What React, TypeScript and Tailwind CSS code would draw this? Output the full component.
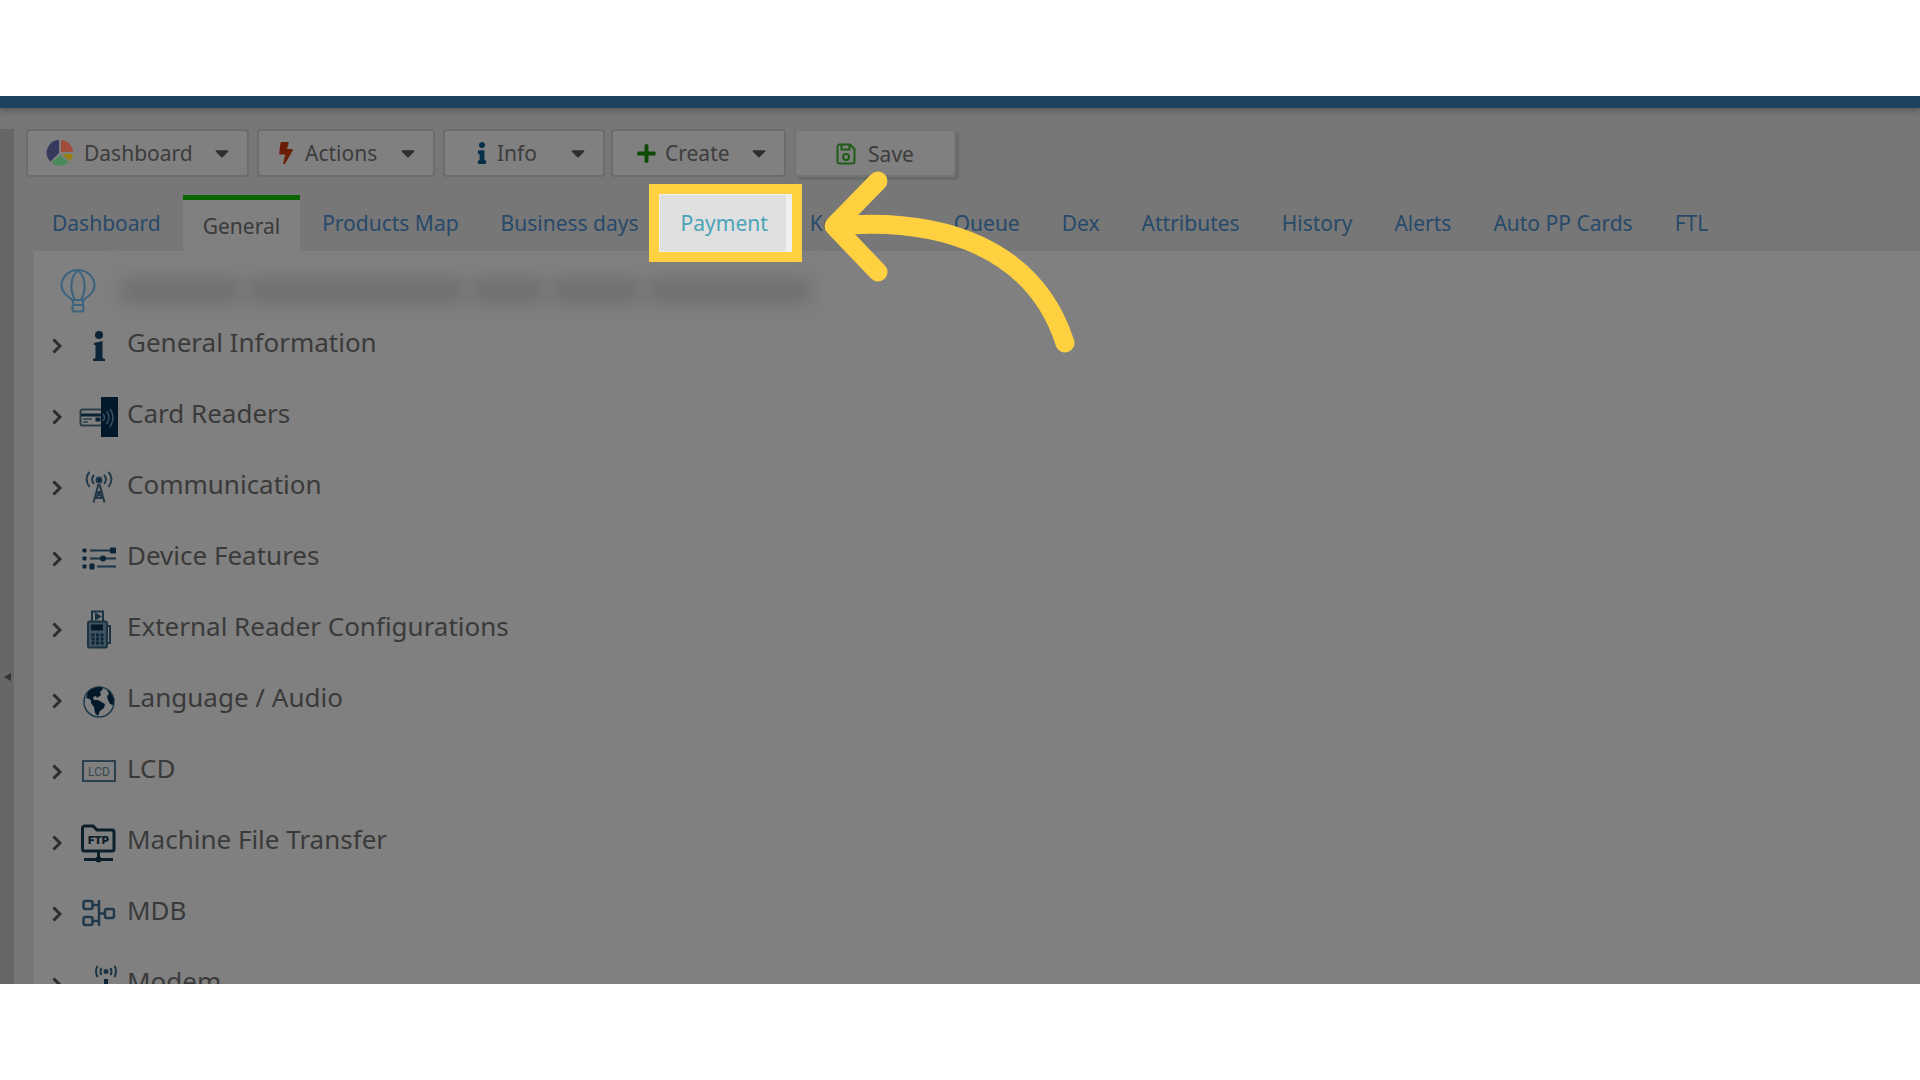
import type { ReactNode } from "react";
import { FaInfo, FaPlus, FaBolt, FaCaretDown } from "react-icons/fa";

const INK = "#0b2438";

function PieIcon() {
  return (
    <svg width="28" height="28" viewBox="0 0 28 28">
      <path d="M13 1v13l-8.500 8.500A12.500 12.500 0 0 1 13 1z" fill="#353a5c" />
      <path d="M15 1a12.500 12.500 0 0 1 12 12H15z" fill="#a04f3c" />
      <path d="M16 15h11a12 12 0 0 1-3.200 7z" fill="#97800f" />
      <path d="M14 16l8.500 7.500a13 13 0 0 1-17 0z" fill="#4c8a5c" />
    </svg>
  );
}

function SaveIcon() {
  return (
    <svg width="20" height="22" viewBox="0 0 20 22" fill="none" stroke="#1f5c17" strokeWidth="2">
      <path d="M3.500 1.500H14l4.500 4.500v12.500a2 2 0 0 1-2 2h-13a2 2 0 0 1-2-2v-15a2 2 0 0 1 2-2z" />
      <path d="M5.500 2v4.500h8V2" />
      <circle cx="10" cy="14" r="3" />
    </svg>
  );
}

function BalloonIcon() {
  return (
    <svg width="36" height="44" viewBox="0 0 36 44" fill="none" stroke="#3b627e" strokeWidth="2">
      <path d="M12.500 31C7 27 1.500 23 1.500 16.500a16.500 15.500 0 0 1 33 0C34.500 23 29 27 23.500 31z" />
      <path d="M15 31C10 22 9.500 8 18 1.500C26.500 8 26 22 21 31" />
      <path d="M12.500 31l1 5M23.500 31l-1 5" />
      <rect x="12.500" y="36" width="11" height="6.500" rx="2" />
    </svg>
  );
}

function InfoIcon() {
  return (
    <svg width="40" height="40" viewBox="0 0 40 40" fill={INK}>
      <circle cx="20" cy="9" r="4" />
      <path d="M15 17l8.500-2v17l2.500 1v2H14v-2l2.500-1V19H15z" />
    </svg>
  );
}

function CardIcon() {
  return (
    <svg width="40" height="40" viewBox="0 0 40 40" fill="none" stroke="#2b3e4c">
      <rect x="1.500" y="12.500" width="28" height="16" rx="2" strokeWidth="2" />
      <path d="M2 18h21" stroke={INK} strokeWidth="3" />
      <path d="M4 22h9M4 25h5" strokeWidth="1.500" />
      <rect x="17" y="21" width="4" height="3" fill={INK} stroke={INK} />
      <rect x="22" y="0" width="17" height="40" fill="#03192a" stroke="none" />
      <path d="M24 17q3 3.500 0 7M27.500 14q5 6.500 0 13M31 12q6 8.500 0 18" stroke="#3d5260" strokeWidth="1.500" />
    </svg>
  );
}

function AntennaIcon() {
  return (
    <svg width="40" height="40" viewBox="0 0 40 40" fill="none" stroke="#22394a" strokeWidth="2">
      <path d="M10.500 4q-6 7 0 15M15 7q-4 4.500 0 9M29.500 4q6 7 0 15M25 7q4 4.500 0 9" />
      <circle cx="20" cy="12" r="2.500" fill={INK} />
      <path d="M19.500 16l-5 18.500M20.500 16l5 18.500M17.500 24h5M16 30h8M17.500 24l6.500 6M22.500 24L16 30" />
    </svg>
  );
}

function SlidersIcon() {
  return (
    <svg width="40" height="40" viewBox="0 0 40 40" fill={INK} stroke="#1b3548" strokeWidth="2">
      <path d="M11 11.500h20M11 19.500h26M18 27.500h19" />
      <g stroke="none">
        <rect x="3.500" y="9.500" width="4" height="4" rx="1" />
        <rect x="3.500" y="17.500" width="4" height="4" rx="1" />
        <rect x="3.500" y="25.500" width="4" height="4" rx="1" />
        <rect x="31" y="8.500" width="6" height="6" rx="1" />
        <circle cx="24" cy="19.500" r="3" />
        <rect x="10.500" y="24.500" width="5" height="6" rx="1" />
      </g>
    </svg>
  );
}

function TerminalIcon() {
  return (
    <svg width="40" height="40" viewBox="0 0 40 40" fill="none" stroke="#1b3343" strokeWidth="2">
      <path d="M13 11V1.500h11V11" />
      <path d="M17 4v5l4-2.500z" fill={INK} />
      <rect x="9" y="11.500" width="19" height="26" rx="1.500" fill="#40535f" />
      <path d="M28 16h3v17h-3" />
      <rect x="12" y="14.500" width="12" height="6" fill="#03192a" stroke="none" />
      <path d="M14 23.500v11M18.500 23.500v11M23 23.500v11" strokeDasharray="3 1" stroke={INK} strokeWidth="3" />
    </svg>
  );
}

function GlobeIcon() {
  return (
    <svg width="40" height="40" viewBox="0 0 40 40">
      <circle cx="20" cy="21" r="15" fill="none" stroke="#1f3a4c" strokeWidth="1.500" />
      <path d="M9 11q5-5 13-5l2 2-3 3 1 3-4 3-1-2-3 1 1 3 4 0 7 4-1 4-4 3-2 5-3-3-1-6-3-4 0-3-4-2-1 1z" fill="#03192a" />
      <path d="M28 9l3 2 4 7-1 6-3-1-2-4-1-4 2-2z" fill="#03192a" />
    </svg>
  );
}

function LcdIcon() {
  return (
    <svg width="40" height="40" viewBox="0 0 40 40">
      <rect x="4" y="9" width="32" height="20" fill="none" stroke="#2c414f" strokeWidth="2" />
      <text x="20" y="24" textAnchor="middle" fontSize="12" fontFamily="Roboto, sans-serif" fill="#34464f">
        LCD
      </text>
    </svg>
  );
}

function FtpIcon() {
  return (
    <svg width="40" height="40" viewBox="0 0 40 40" fill="none" stroke="#0d1f2a" strokeWidth="3">
      <path d="M3.500 5a2 2 0 0 1 2-2H14l4 4h15a2 2 0 0 1 2 2v17a2 2 0 0 1-2 2H5.500a2 2 0 0 1-2-2z" />
      <path d="M19.500 28v9M5 36.500h29" />
      <circle cx="19.500" cy="36.500" r="1.500" />
      <text x="19.500" y="21" textAnchor="middle" fontSize="11" fontWeight="900" fontFamily="Inter, sans-serif" fill="#0d1f2a" stroke="none">
        FTP
      </text>
    </svg>
  );
}

function MdbIcon() {
  return (
    <svg width="40" height="40" viewBox="0 0 40 40" fill="none" stroke="#20384a" strokeWidth="2.500">
      <rect x="4.500" y="7" width="9" height="8" rx="2" />
      <rect x="4.500" y="23" width="9" height="8" rx="2" />
      <rect x="26" y="15" width="9" height="9" rx="2" />
      <path d="M13.500 11H20M13.500 27H20M20 6v26M20 19.500h6" />
    </svg>
  );
}

function ModemIcon() {
  return (
    <svg width="40" height="40" viewBox="0 0 40 40" fill="none" stroke="#1b3343" strokeWidth="2">
      <path d="M18.500 1q-3 5 0 11M22.500 3q-2 3.500 0 7M35.500 1q3 5 0 11M31.500 3q2 3.500 0 7" />
      <circle cx="27" cy="6.500" r="1.500" fill={INK} />
      <path d="M27 14v14" stroke={INK} strokeWidth="4" />
    </svg>
  );
}

const MENUS: { label: string; icon: ReactNode; box: string; iconBox: string }[] = [
  { label: "Dashboard", icon: <PieIcon />, box: "w-[223px] mr-2 pl-4.5", iconBox: "w-7" },
  { label: "Actions", icon: <FaBolt size={22} color="#6b1e06" />, box: "w-[178px] mr-2 pl-4.5", iconBox: "w-4.5" },
  { label: "Info", icon: <FaInfo size={22} color="#06304a" />, box: "w-[162px] mr-1.5 pl-8", iconBox: "w-2.5" },
  { label: "Create", icon: <FaPlus size={21} color="#0f4a06" />, box: "w-[175px] mr-2 pl-6", iconBox: "w-4.5" },
];

const TABS = [
  "Dashboard",
  "General",
  "Products Map",
  "Business days",
  "Payment",
  "Keep Alive",
  "Queue",
  "Dex",
  "Attributes",
  "History",
  "Alerts",
  "Auto PP Cards",
  "FTL",
];

const SECTIONS: { label: string; icon: ReactNode }[] = [
  { label: "General Information", icon: <InfoIcon /> },
  { label: "Card Readers", icon: <CardIcon /> },
  { label: "Communication", icon: <AntennaIcon /> },
  { label: "Device Features", icon: <SlidersIcon /> },
  { label: "External Reader Configurations", icon: <TerminalIcon /> },
  { label: "Language / Audio", icon: <GlobeIcon /> },
  { label: "LCD", icon: <LcdIcon /> },
  { label: "Machine File Transfer", icon: <FtpIcon /> },
  { label: "MDB", icon: <MdbIcon /> },
  { label: "Modem", icon: <ModemIcon /> },
];

function Toolbar() {
  return (
    <div className="flex">
      {MENUS.map((menu) => (
        <button
          key={menu.label}
          type="button"
          className={`flex h-12 shrink-0 items-center rounded-sm border-2 border-[#6c6c6c] bg-[#808080] pr-3.5 text-[#3c3c3c] ${menu.box}`}
        >
          <span className={`flex shrink-0 justify-center ${menu.iconBox}`}>
            <span className="shrink-0">{menu.icon}</span>
          </span>
          <span className="ml-2.5 flex-1 text-left">{menu.label}</span>
          <FaCaretDown size={22} color="#2e2e2e" />
        </button>
      ))}
      <button
        type="button"
        className="flex h-12 w-[162px] shrink-0 items-center justify-center gap-3 rounded-sm border-2 border-[#747474] bg-[#808080] pt-0.5 text-[#3c3c3c] shadow-[3px_3px_1px_#676c66]"
      >
        <SaveIcon />
        Save
      </button>
    </div>
  );
}

function Tab({ label }: { label: string }) {
  if (label === "General") {
    return (
      <button type="button" role="tab" aria-selected="true" className="h-14 shrink-0 border-t-5 border-[#0a6400] bg-[#808080] px-5 text-[#3a3a3a]">
        {label}
      </button>
    );
  }
  if (label === "Payment") {
    return (
      <div className="relative h-14 shrink-0">
        <button type="button" role="tab" className="h-full px-5 text-[#4ba3b8]">
          <span className="relative z-20">{label}</span>
        </button>
        <div className="absolute -top-[11px] -right-3.5 -bottom-[11px] -left-3 z-10 border-10 border-[#ffd141] bg-[#efefef] py-px pr-1.5 pl-px">
          <div className="h-full bg-[#e0e0e0]" />
        </div>
        <svg className="absolute -top-10 left-32.5 z-20" width="290" height="210" viewBox="0 0 290 210" fill="none" stroke="#ffd141" strokeWidth="19" strokeLinecap="round" strokeLinejoin="round">
          <path d="M87 26L43 71l44 46M43 71C154 61 244 95 274 188" />
        </svg>
      </div>
    );
  }
  return (
    <button type="button" role="tab" className="h-14 shrink-0 px-5 text-[#27496a]">
      {label}
    </button>
  );
}

export default function App() {
  return (
    <div className="h-screen overflow-hidden bg-white pt-24 pb-24 font-['Noto_Sans',sans-serif]">
      <div className="flex h-full flex-col overflow-hidden bg-[#777777] text-[21px] leading-7">
        <header className="h-3 shrink-0 bg-[#1b4360] shadow-[0_2px_6px_#555555]" />
        <div className="flex min-h-0 flex-1 pt-[21px]">
          <aside className="flex w-3.5 shrink-0 items-center justify-center bg-[#676767] pt-60">
            <svg width="8" height="8" viewBox="0 0 8 8">
              <path d="M8 0v8L1 4z" fill="#333333" />
            </svg>
          </aside>
          <main className="flex min-w-0 flex-1 flex-col pl-3">
            <Toolbar />
            <nav role="tablist" className="mt-4.5 ml-1.5 flex gap-0.5">
              {TABS.map((label) => (
                <Tab key={label} label={label} />
              ))}
            </nav>
            <section className="ml-2 min-h-0 flex-1 overflow-hidden bg-[#808080]">
              <div className="flex h-[73px] items-center gap-5 pt-1.5 pl-6.5">
                <BalloonIcon />
                <div className="flex h-8 w-[700px] items-center gap-4 bg-[#7a7a7a] px-2 blur-[9px]">
                  <div className="h-5 w-28 bg-[#6d6d6d]" />
                  <div className="h-5 w-52 bg-[#6d6d6d]" />
                  <div className="h-5 w-16 bg-[#6d6d6d]" />
                  <div className="h-5 w-20 bg-[#6d6d6d]" />
                  <div className="h-5 flex-1 bg-[#6d6d6d]" />
                </div>
              </div>
              <ul>
                {SECTIONS.map((section) => (
                  <li key={section.label} className="h-[71px]">
                    <button type="button" className="flex items-start text-left text-[26px] text-[#3a3a3a]">
                      <svg className="mt-3.5 ml-4.5" width="10" height="16" viewBox="0 0 10 16" fill="none" stroke="#2c2c2c" strokeWidth="3">
                        <path d="M1.500 1.500L8 8l-6.500 6.500" />
                      </svg>
                      <span className="mt-0.5 ml-[17px]">{section.icon}</span>
                      <span className="mt-1 ml-2">{section.label}</span>
                    </button>
                  </li>
                ))}
              </ul>
            </section>
          </main>
        </div>
      </div>
    </div>
  );
}
